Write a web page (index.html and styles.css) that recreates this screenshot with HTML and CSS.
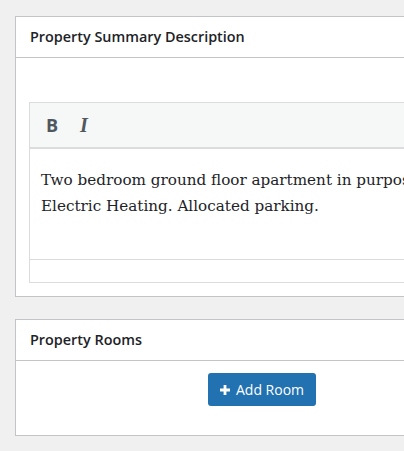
FILE: index.html
```html
<!DOCTYPE html>
<html>
<head>
<meta charset="utf-8">
<link rel="stylesheet" href="styles.css">
</head>
<body>
<div class="page">
  <section class="card">
    <div class="card-header">Property Summary Description</div>
    <div class="card-body summary-body">
      <div class="editor">
        <div class="toolbar">
          <span class="tb-btn tb-bold">B</span>
          <span class="tb-btn tb-italic">I</span>
        </div>
        <div class="editor-content">Two bedroom ground floor apartment in purpose built block. Gas Central Heating.<br>Electric Heating. Allocated parking.</div>
        <div class="editor-status"></div>
      </div>
    </div>
  </section>
  <section class="card">
    <div class="card-header">Property Rooms</div>
    <div class="card-body rooms-body">
      <button class="btn-primary"><svg class="plus" viewBox="0 0 10 10" width="10" height="10"><path d="M3.6 0h2.8v3.6H10v2.8H6.4V10H3.6V6.4H0V3.6h3.6z" fill="#fff"/></svg>Add Room</button>
    </div>
  </section>
</div>
</body>
</html>
```
FILE: styles.css
```css
html, body {
  margin: 0;
  padding: 0;
  overflow: hidden;
  background: #f0f0f1;
}
.page {
  padding: 16px 0 0 15px;
  display: flex;
  flex-direction: column;
  gap: 22px;
  width: 800px;
}
.card {
  background: #fff;
  border: 1px solid #c3c4c7;
}
.card-header {
  height: 41px;
  box-sizing: border-box;
  padding: 0 14px 1px 14px;
  display: flex;
  align-items: center;
  border-bottom: 1px solid #c3c4c7;
  font-family: "Open Sans", sans-serif;
  font-size: 14.4px;
  font-weight: 600;
  color: #1d2327;
}
.summary-body {
  padding: 44px 13px 13px 13px;
}
.editor {
  border: 1px solid #dcdcde;
}
.toolbar {
  height: 44px;
  background: #f6f7f7;
  border-bottom: 2px solid #dcdcde;
  display: flex;
  align-items: center;
  padding-left: 16px;
  gap: 22px;
}
.tb-btn {
  font-family: "Open Sans", sans-serif;
  font-size: 18px;
  font-weight: 700;
  color: #50575e;
  line-height: 1;
}
.tb-italic {
  font-family: "Liberation Serif", serif;
  font-style: italic;
  font-size: 20px;
}
.editor-content {
  height: 111px;
  box-sizing: border-box;
  padding: 18px 11px 0 11px;
  font-family: Georgia, "DejaVu Serif", serif;
  font-size: 15.2px;
  line-height: 26px;
  color: #1d2327;
  border-bottom: 1px solid #dcdcde;
  white-space: nowrap;
}
.editor-status {
  height: 22px;
}
.rooms-body {
  padding: 12px 0 29px 192px;
}
.btn-primary {
  display: flex;
  align-items: center;
  gap: 6px;
  height: 33px;
  padding: 0 12px;
  border: 0;
  border-radius: 3px;
  background: #2271b1;
  color: #fff;
  font-family: "Open Sans", sans-serif;
  font-size: 14px;
}
.plus {
  display: block;
}
```
